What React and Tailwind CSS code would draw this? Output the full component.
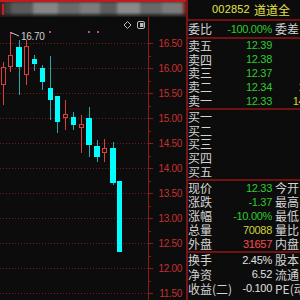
const NUM = "'Liberation Sans', Arial, sans-serif";
const CJK = "'Noto Sans CJK SC', 'Noto Sans', sans-serif";

// candle data in screen pixels: x/w, body top/bottom, wick high/low
const candles = [
  { x: 1, w: 5, up: true, t: 67, b: 85, h: 62, l: 105 },
  { x: 8, w: 5, up: true, t: 55, b: 67, h: 33, l: 72 },
  { x: 16, w: 6, up: false, t: 47, b: 67, h: 40, l: 95 },
  { x: 24, w: 5, up: true, t: 46, b: 75, h: 40, l: 85 },
  { x: 32, w: 5, up: false, t: 59, b: 64, h: 55, l: 71 },
  { x: 40, w: 5, up: false, t: 68, b: 82, h: 65, l: 90 },
  { x: 48, w: 5, up: false, t: 88, b: 100, h: 56, l: 120 },
  { x: 55, w: 5, up: false, t: 96, b: 122, h: 96, l: 133 },
  { x: 63, w: 5, up: true, t: 114, b: 118, h: 100, l: 130 },
  { x: 71, w: 5, up: false, t: 117, b: 125, h: 112, l: 130 },
  { x: 79, w: 5, up: true, t: 124, b: 128, h: 115, l: 153 },
  { x: 86, w: 6, up: false, t: 118, b: 145, h: 107, l: 157 },
  { x: 94, w: 6, up: false, t: 146, b: 157, h: 140, l: 162 },
  { x: 102, w: 5, up: true, t: 148, b: 153, h: 139, l: 162 },
  { x: 110, w: 6, up: false, t: 148, b: 183, h: 142, l: 185 },
  { x: 117, w: 5, up: false, t: 181, b: 252, h: 181, l: 252 },
];

const levels = ['16.50', '16.00', '15.50', '15.00', '14.50', '14.00', '13.50', '13.00', '12.50', '12.00', '11.50'];

const sells = [
  { label: '卖五', price: '12.39', vol: '8' },
  { label: '卖四', price: '12.38', vol: '10' },
  { label: '卖三', price: '12.37', vol: '25' },
  { label: '卖二', price: '12.34', vol: '152' },
  { label: '卖一', price: '12.33', vol: '1452' },
];

const buys = ['买一', '买二', '买三', '买四', '买五'];

const quotes = [
  { label: '现价', value: '12.33', color: 'text-[#2ccb2c]', label2: '今开' },
  { label: '涨跌', value: '-1.37', color: 'text-[#2ccb2c]', label2: '最高' },
  { label: '涨幅', value: '-10.00%', color: 'text-[#2ccb2c]', label2: '最低' },
  { label: '总量', value: '70088', color: 'text-[#d2d23a]', label2: '量比' },
  { label: '外盘', value: '31657', color: 'text-[#ff4a4a]', label2: '内盘' },
];

const finance = [
  { label: '换手', value: '2.45%', label2: '股本' },
  { label: '净资', value: '6.52', label2: '流通' },
  { label: '收益(二)', value: '-0.100', label2: 'PE(动' },
];

function Row({ label, value, color = 'text-[#e0e0e0]', label2, extra, className = 'h-[13.8px]' }) {
  return (
    <div className={`flex items-center whitespace-nowrap leading-none ${className}`}>
      <div className="flex w-[84px] shrink-0 items-center justify-between">
        <span className="text-[12px] text-[#d4d4d4]" style={{ fontFamily: CJK }}>{label}</span>
        {value && (
          <span className={`text-[11px] tracking-[-0.3px] ${color}`} style={{ fontFamily: NUM }}>{value}</span>
        )}
      </div>
      {label2 && (
        <span className="ml-[3px] text-[12px] text-[#d4d4d4]" style={{ fontFamily: CJK }}>{label2}</span>
      )}
      {extra && (
        <span className="w-[44px] shrink-0 text-right text-[11px] tracking-[-0.3px] text-[#d2d23a]" style={{ fontFamily: NUM }}>
          {extra}
        </span>
      )}
    </div>
  );
}

function Chart() {
  return (
    <svg width="186" height="283" viewBox="0 17 186 283" className="block" shapeRendering="crispEdges">
      {/* grid */}
      {levels.map((lv, i) => {
        const y = 43 + i * 25;
        return (
          <g key={lv}>
            <line x1="0" x2="148" y1={y + 0.5} y2={y + 0.5} stroke="#701c1c" strokeDasharray="1 2" />
            <line x1="149" x2="153" y1={y + 0.5} y2={y + 0.5} stroke="#8c1c1c" />
            <line x1="149" x2="151" y1={y + 13} y2={y + 13} stroke="#8c1c1c" />
            <text
              x="182"
              y={y + 4}
              textAnchor="end"
              fill="#c63030"
              fontSize="10"
              letterSpacing="-0.3"
              fontFamily={NUM}
              shapeRendering="auto"
            >
              {lv}
            </text>
          </g>
        );
      })}
      {/* axis */}
      <line x1="148.5" x2="148.5" y1="17" y2="300" stroke="#8c1c1c" />

      {/* toolbar icons */}
      <g shapeRendering="auto">
        <path d="M127.5 21.5 L131 25 L127.5 28.5 L124 25 Z" fill="none" stroke="#bdbdbd" strokeWidth="1" />
        <rect x="137.5" y="21.5" width="7" height="7" rx="1.5" fill="none" stroke="#bdbdbd" />
        <rect x="140" y="23" width="3.5" height="4" fill="#bdbdbd" />
      </g>

      {/* event markers */}
      {[49, 88, 97].map((x) => (
        <rect key={x} x={x} y="31" width="2" height="2" fill="#c040c0" />
      ))}

      {/* max price marker */}
      <rect x="10" y="32" width="2" height="2" fill="#d070d0" />
      <line x1="12" y1="33" x2="19" y2="36" stroke="#c8c8c8" shapeRendering="auto" />
      <text x="21" y="40" fill="#cfcfcf" fontSize="10" letterSpacing="-0.3" fontFamily={NUM} shapeRendering="auto">
        16.70
      </text>

      {/* candles */}
      {candles.map((c, i) => {
        const cx = c.x + Math.floor(c.w / 2) + 0.5;
        if (c.up) {
          return (
            <g key={i} stroke="#d84040">
              <line x1={cx} x2={cx} y1={c.h} y2={c.t} />
              <line x1={cx} x2={cx} y1={c.b} y2={c.l} />
              <rect x={c.x + 0.5} y={c.t + 0.5} width={c.w - 1} height={c.b - c.t - 1} fill="#0c0c0c" />
            </g>
          );
        }
        return (
          <g key={i}>
            <line x1={cx} x2={cx} y1={c.h} y2={c.l} stroke="#2aa8a8" />
            <rect x={c.x} y={c.t} width={c.w} height={c.b - c.t} fill="#00ffff" />
          </g>
        );
      })}
    </svg>
  );
}

function TopBar() {
  const blocks = [
    ['w-[4px]', 'bg-[#4a1a1a]'],
    ['w-[7px]', 'bg-[#404040]'],
    ['w-[22px]', 'bg-[#5a5a5a]'],
    ['w-[25px]', 'bg-[#868686]'],
    ['w-[22px]', 'bg-[#6a6a6a]'],
    ['w-[20px]', 'bg-[#7c7c7c]'],
    ['w-[17px]', 'bg-[#5c5c5c]'],
    ['w-[23px]', 'bg-[#8a8a8a]'],
    ['w-[22px]', 'bg-[#686868]'],
    ['w-[21px]', 'bg-[#7a7a7a]'],
    ['w-[3px]', 'bg-[#8a2020]'],
  ];
  return (
    <div className="relative h-[17px] overflow-hidden border-t-2 border-[#c41a1a] bg-[#2a2a2a]">
      <div className="flex h-full blur-[1.5px]">
        {blocks.map(([w, bg], i) => (
          <div key={i} className={`h-full shrink-0 ${w} ${bg}`} />
        ))}
      </div>
      <div className="absolute inset-x-0 bottom-0 h-[5px] bg-gradient-to-b from-transparent to-[#1a1a1a]" />
      <div className="absolute left-[2px] top-[2px] h-[11px] w-[2px] bg-[#c82020]" />
    </div>
  );
}

export default function App() {
  return (
    <div className="flex h-[300px] w-[300px] overflow-hidden bg-[#0c0c0c]">
      {/* chart side */}
      <div className="flex w-[186px] shrink-0 flex-col">
        <TopBar />
        <Chart />
      </div>

      {/* quote panel */}
      <div className="flex w-[114px] shrink-0 flex-col overflow-hidden border-l-2 border-[#7a1414]">
        <div className="flex h-[21px] items-center border-b-2 border-[#6e1212] pl-[24px] leading-none whitespace-nowrap text-[#e4e44a]">
          <span className="text-[11px] tracking-[0.2px]" style={{ fontFamily: NUM }}>002852</span>
          <span className="ml-[4px] text-[12px]" style={{ fontFamily: CJK }}>道道全</span>
        </div>

        <div className="flex h-[18px] flex-col justify-center border-b-2 border-[#6e1212]">
          <Row label="委比" value="-100.00%" color="text-[#2ccb2c]" label2="委差" className="h-[16px]" />
        </div>

        <div className="h-[71px] border-b-2 border-[#6e1212]">
          {sells.map((s) => (
            <Row key={s.label} label={s.label} value={s.price} color="text-[#2ccb2c]" extra={s.vol} />
          ))}
        </div>

        <div className="h-[71px] border-b-2 border-[#6e1212]">
          {buys.map((b) => (
            <Row key={b} label={b} />
          ))}
        </div>

        <div className="h-[72px] border-b-2 border-[#6e1212]">
          {quotes.map((q) => (
            <Row key={q.label} label={q.label} value={q.value} color={q.color} label2={q.label2} className="h-[14px]" />
          ))}
        </div>

        <div>
          {finance.map((f) => (
            <Row key={f.label} label={f.label} value={f.value} label2={f.label2} className="h-[14.4px]" />
          ))}
        </div>
      </div>
    </div>
  );
}
